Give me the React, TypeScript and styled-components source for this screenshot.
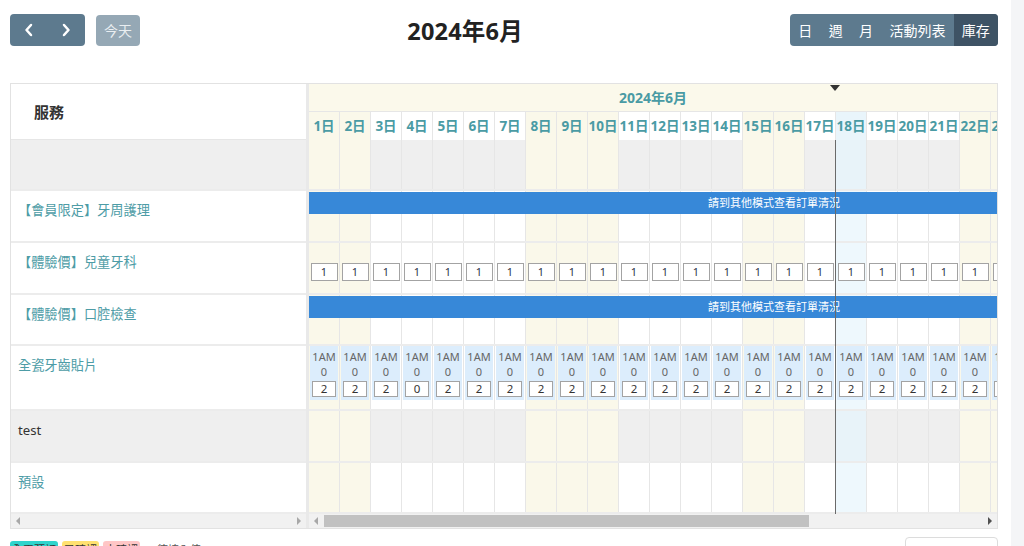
import styled, { createGlobalStyle } from "styled-components";

const DAY_W = 31;
const DAYS = Array.from({ length: 30 }, (_, i) => i + 1);
const OFF_DAYS = new Set([1, 2, 8, 9, 10, 15, 16, 22, 23, 29, 30]);
const TODAY = 18;

type RowKind = "group" | "bar" | "count" | "slot" | "plain";

type Row = {
  label: string;
  kind: RowKind;
  h: number;
};

const ROWS: Row[] = [
  { label: "", kind: "group", h: 51 },
  { label: "【會員限定】牙周護理", kind: "bar", h: 52 },
  { label: "【體驗價】兒童牙科", kind: "count", h: 52 },
  { label: "【體驗價】口腔檢查", kind: "bar", h: 51 },
  { label: "全瓷牙齒貼片", kind: "slot", h: 65 },
  { label: "test", kind: "group", h: 52 },
  { label: "預設", kind: "plain", h: 51 },
];

const GlobalStyle = createGlobalStyle`
  html, body {
    margin: 0;
    padding: 0;
    height: 100%;
    overflow: hidden;
  }
  body {
    font-family: "Noto Sans", "Noto Sans CJK TC", sans-serif;
    color: #333;
    background: #fff;
  }
  * {
    box-sizing: border-box;
  }
`;

function Chevron({ dir }: { dir: "left" | "right" }) {
  return (
    <svg width="10" height="14" viewBox="0 0 10 14">
      <path
        d={dir === "left" ? "M7 2 L2.5 7 L7 12" : "M3 2 L7.5 7 L3 12"}
        fill="none"
        stroke="#fff"
        strokeWidth="2.5"
        strokeLinecap="round"
        strokeLinejoin="round"
      />
    </svg>
  );
}

function App() {
  return (
    <>
      <GlobalStyle />
      <Page>
        <Main>
          <Toolbar>
            <LeftTools>
              <NavGroup>
                <NavButton>
                  <Chevron dir="left" />
                </NavButton>
                <NavButton>
                  <Chevron dir="right" />
                </NavButton>
              </NavGroup>
              <TodayButton>今天</TodayButton>
            </LeftTools>
            <Title>2024年6月</Title>
            <ViewGroup>
              <ViewButton>日</ViewButton>
              <ViewButton>週</ViewButton>
              <ViewButton>月</ViewButton>
              <ViewButton>活動列表</ViewButton>
              <ViewButton $active>庫存</ViewButton>
            </ViewGroup>
          </Toolbar>

          <Frame>
            <ResourceColumn>
              <ResourceHeader>服務</ResourceHeader>
              {ROWS.map((row, i) => (
                <ResourceCell key={i} $h={row.h} $group={row.kind === "group"}>
                  {row.label}
                </ResourceCell>
              ))}
              <ScrollRow>
                <ArrowLeft $color="#a8a8a8" />
                <ArrowRight $color="#a8a8a8" />
              </ScrollRow>
            </ResourceColumn>

            <Divider />

            <TimelineColumn>
              <Viewport>
                <MonthRow>2024年6月</MonthRow>
                <DayHeaderRow>
                  {DAYS.map((d) => (
                    <DayLabel key={d} $off={OFF_DAYS.has(d)} $today={d === TODAY}>
                      {d}日
                    </DayLabel>
                  ))}
                </DayHeaderRow>

                {ROWS.map((row, i) => (
                  <LaneRow key={i} $h={row.h}>
                    {DAYS.map((d) => (
                      <LaneCell
                        key={d}
                        $off={OFF_DAYS.has(d)}
                        $today={d === TODAY}
                        $group={row.kind === "group"}
                        $kind={row.kind}
                      >
                        {row.kind === "count" && <QtyBox>1</QtyBox>}
                        {row.kind === "slot" && (
                          <SlotBlock>
                            <SlotText>1AM</SlotText>
                            <SlotText>0</SlotText>
                            <SlotBox>{d === 4 ? 0 : 2}</SlotBox>
                          </SlotBlock>
                        )}
                      </LaneCell>
                    ))}
                    {row.kind === "bar" && <InfoBar>請到其他模式查看訂單清況</InfoBar>}
                  </LaneRow>
                ))}

                <NowMarker />
                <NowLine />
              </Viewport>
              <ScrollRow>
                <ArrowLeft $color="#a8a8a8" />
                <Track>
                  <Thumb />
                </Track>
                <ArrowRight $color="#505050" />
              </ScrollRow>
            </TimelineColumn>
          </Frame>

          <Legend>
            <Badge $bg="#2fd4cc">全天預訂</Badge>
            <Badge $bg="#ffe170">已確認</Badge>
            <Badge $bg="#ffc6c6">未確認</Badge>
            <LegendNote>• 待填入值</LegendNote>
            <PageBox />
          </Legend>
        </Main>
        <SideStrip />
      </Page>
    </>
  );
}

const Page = styled.div`
  display: flex;
  min-height: 100vh;
`;

const Main = styled.div`
  flex: 0 0 1011px;
  padding: 14px 13px 0 10px;
`;

const SideStrip = styled.div`
  flex: 1;
  background: #f4f5f7;
`;

const Toolbar = styled.div`
  height: 32px;
  display: flex;
  justify-content: space-between;
  align-items: center;
`;

const LeftTools = styled.div`
  display: flex;
  align-items: center;
  gap: 11px;
`;

const NavGroup = styled.div`
  width: 75px;
  height: 32px;
  display: flex;
  background: #5d7a8e;
  border-radius: 4px;
  overflow: hidden;
`;

const NavButton = styled.div`
  flex: 1;
  display: flex;
  align-items: center;
  justify-content: center;
`;

const TodayButton = styled.div`
  width: 44px;
  height: 31px;
  border-radius: 4px;
  background: #95a8b5;
  color: #e9eef1;
  font-size: 14px;
  display: flex;
  align-items: center;
  justify-content: center;
`;

const Title = styled.h2`
  margin: 0;
  font-size: 23.5px;
  font-weight: 700;
  color: #222;
  letter-spacing: 0.2px;
`;

const ViewGroup = styled.div`
  height: 32px;
  display: flex;
  border-radius: 4px;
  overflow: hidden;
  background: #5d7a8e;
`;

const ViewButton = styled.div<{ $active?: boolean }>`
  padding: 0 8.2px;
  display: flex;
  align-items: center;
  font-size: 14px;
  color: #fff;
  background: ${(p) => (p.$active ? "#3e5365" : "transparent")};
`;

const Frame = styled.div`
  margin-top: 37px;
  display: grid;
  grid-template-columns: 295px 3px 688px;
  border: 1px solid #e2e2e2;
`;

const ResourceColumn = styled.div`
  display: flex;
  flex-direction: column;
`;

const ResourceHeader = styled.div`
  height: 56px;
  padding-left: 23px;
  display: flex;
  align-items: center;
  font-size: 15px;
  font-weight: 700;
  color: #333;
  border-bottom: 1px solid #e6e6e6;
`;

const ResourceCell = styled.div<{ $h: number; $group: boolean }>`
  height: ${(p) => p.$h}px;
  padding: 9px 0 0 7px;
  font-size: 13.2px;
  line-height: 20px;
  color: ${(p) => (p.$group ? "#333" : "#4d9ca6")};
  background: ${(p) => (p.$group ? "#efefef" : "#fff")};
  border-bottom: 2px solid #ececec;
`;

const Divider = styled.div`
  background: #e9e9e9;
`;

const TimelineColumn = styled.div`
  display: flex;
  flex-direction: column;
  min-width: 0;
`;

const Viewport = styled.div`
  position: relative;
  overflow: hidden;
`;

const MonthRow = styled.div`
  height: 27px;
  line-height: 27px;
  text-align: center;
  background: #fbf9eb;
  color: #4a9ba4;
  font-size: 14px;
  font-weight: 700;
`;

const DayHeaderRow = styled.div`
  width: ${DAYS.length * DAY_W}px;
  height: 29px;
  display: flex;
  border-top: 1px solid #e6e6e6;
`;

const DayLabel = styled.div<{ $off: boolean; $today: boolean }>`
  flex: none;
  width: ${DAY_W}px;
  line-height: 28px;
  text-align: center;
  font-size: 13.5px;
  font-weight: 700;
  color: #4a9ba4;
  white-space: nowrap;
  border-right: 1px solid #e6e6e6;
  background: ${(p) => (p.$today ? "#e9f5fb" : p.$off ? "#faf8ea" : "#fff")};
`;

const LaneRow = styled.div<{ $h: number }>`
  position: relative;
  width: ${DAYS.length * DAY_W}px;
  height: ${(p) => p.$h}px;
  display: flex;
  border-bottom: 2px solid #ececec;
`;

const LaneCell = styled.div<{
  $off: boolean;
  $today: boolean;
  $group: boolean;
  $kind: RowKind;
}>`
  flex: none;
  width: ${DAY_W}px;
  height: 100%;
  display: flex;
  justify-content: center;
  align-items: flex-start;
  padding-top: ${(p) => (p.$kind === "count" ? "20px" : "0")};
  border-right: 1px solid #e6e6e6;
  background: ${(p) =>
    p.$today
      ? p.$group
        ? "#e8f3f9"
        : "#eef8fd"
      : p.$off
      ? "#faf8ea"
      : p.$group
      ? "#efefef"
      : "#fff"};
`;

const QtyBox = styled.div`
  width: 27px;
  height: 18px;
  border: 1px solid #a3a3a3;
  background: #fff;
  font-size: 11px;
  line-height: 16px;
  text-align: center;
  color: #2c3346;
`;

const SlotBlock = styled.div`
  width: 28px;
  height: 54px;
  padding-top: 3px;
  background: #dcedfc;
  display: flex;
  flex-direction: column;
  align-items: center;
`;

const SlotText = styled.div`
  font-size: 11px;
  line-height: 15px;
  color: #666;
`;

const SlotBox = styled.div`
  margin-top: 2px;
  width: 24px;
  height: 16px;
  border: 1px solid #a3a3a3;
  background: #fff;
  font-size: 11.5px;
  line-height: 14px;
  text-align: center;
  color: #333;
`;

const InfoBar = styled.div`
  position: absolute;
  top: 1px;
  left: 0;
  right: 0;
  height: 22px;
  line-height: 22px;
  background: #3788d8;
  color: #fff;
  font-size: 11px;
  text-align: center;
`;

const NowMarker = styled.div`
  position: absolute;
  top: 1px;
  left: 521px;
  width: 0;
  height: 0;
  border-left: 5px solid transparent;
  border-right: 5px solid transparent;
  border-top: 6px solid #333;
`;

const NowLine = styled.div`
  position: absolute;
  top: 56px;
  bottom: 0;
  left: 526px;
  width: 1px;
  background: #6a6a6a;
`;

const ScrollRow = styled.div`
  height: 14px;
  display: flex;
  align-items: center;
  justify-content: space-between;
  background: #f1f1f1;
  padding: 0 5px;
  gap: 6px;
`;

const ArrowLeft = styled.div<{ $color: string }>`
  flex: none;
  width: 0;
  height: 0;
  border-top: 4px solid transparent;
  border-bottom: 4px solid transparent;
  border-right: 4px solid ${(p) => p.$color};
`;

const ArrowRight = styled.div<{ $color: string }>`
  flex: none;
  width: 0;
  height: 0;
  border-top: 4px solid transparent;
  border-bottom: 4px solid transparent;
  border-left: 4px solid ${(p) => p.$color};
`;

const Track = styled.div`
  flex: 1;
  height: 100%;
  padding: 1px 0;
`;

const Thumb = styled.div`
  width: 485px;
  height: 100%;
  background: #c1c1c1;
`;

const Legend = styled.div`
  margin-top: 8px;
  display: flex;
  align-items: flex-start;
  gap: 4px;
`;

const Badge = styled.span<{ $bg: string }>`
  margin-top: 4px;
  padding: 1px 2px;
  border-radius: 3px;
  background: ${(p) => p.$bg};
  font-size: 11px;
  line-height: 15px;
  color: #333;
`;

const LegendNote = styled.span`
  margin: 4px 0 0 6px;
  font-size: 11px;
  line-height: 17px;
  color: #555;
`;

const PageBox = styled.div`
  margin-left: auto;
  width: 93px;
  height: 30px;
  border: 1px solid #dcdcdc;
  border-radius: 4px;
  background: #fff;
`;

export default App;
